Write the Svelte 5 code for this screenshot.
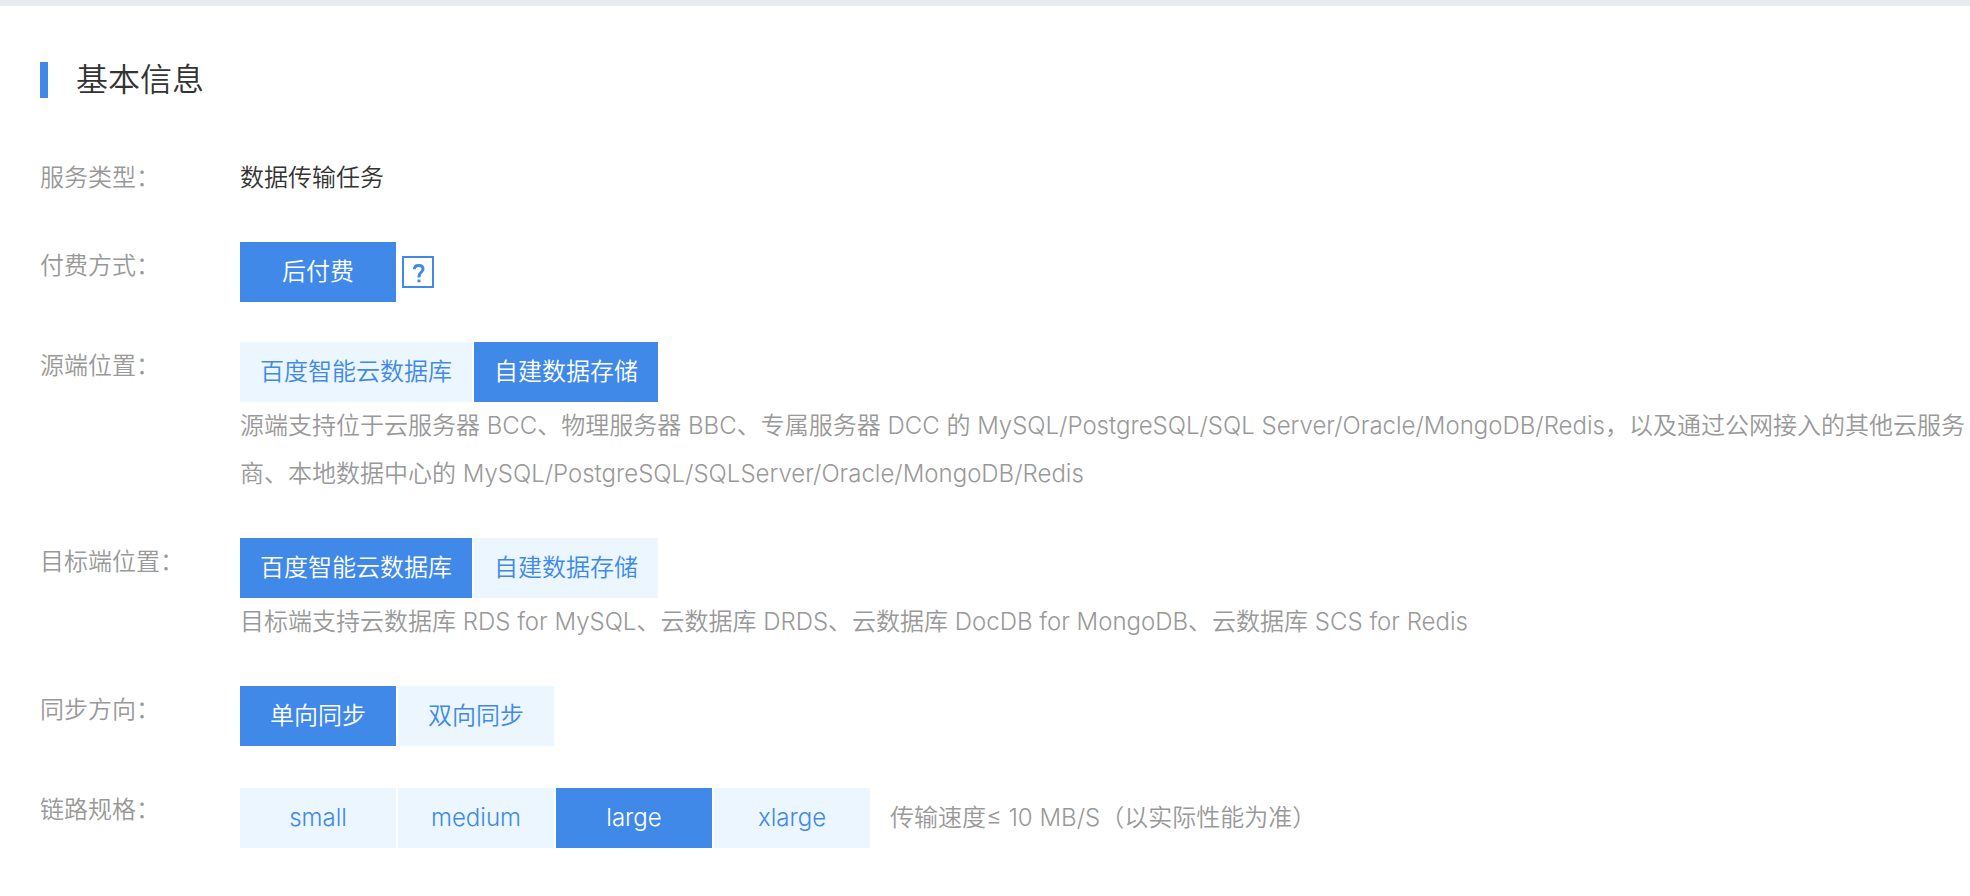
<script lang="ts">
	const engines = [
		{ value: 'cloud', text: '百度智能云数据库' },
		{ value: 'self', text: '自建数据存储' }
	];
	const directions = [
		{ value: 'single', text: '单向同步' },
		{ value: 'double', text: '双向同步' }
	];
	const specs = ['small', 'medium', 'large', 'xlarge'];

	let source = $state('self');
	let target = $state('cloud');
	let direction = $state('single');
	let spec = $state('large');
</script>

<main class="panel">
	<h1>基本信息</h1>

	<div class="row">
		<div class="label">服务类型：</div>
		<div class="content">数据传输任务</div>
	</div>

	<div class="row">
		<div class="label" id="pay">付费方式：</div>
		<div class="content options" role="group" aria-labelledby="pay">
			<button type="button" class="option active">后付费</button>
			<button type="button" class="help" aria-label="付费方式">
				<svg viewBox="0 0 32 32" aria-hidden="true">
					<rect x="1" y="1" width="30" height="30" />
					<path class="mark" d="M12.4 13.2C12.5 10.7 14.3 9.4 16.8 9.4C19.3 9.4 21 10.8 21 13C21 16.2 17 16.4 17 20.4V21.4M17 23.4V26.2" />
				</svg>
			</button>
		</div>
	</div>

	<div class="row">
		<div class="label" id="source">源端位置：</div>
		<div class="content">
			<div class="options" role="group" aria-labelledby="source">
				{#each engines as item}
					<button type="button" class="option" class:active={source === item.value} onclick={() => (source = item.value)}>{item.text}</button>
				{/each}
			</div>
			<p>源端支持位于云服务器 BCC、物理服务器 BBC、专属服务器 DCC 的 MySQL/PostgreSQL/SQL Server/Oracle/MongoDB/Redis，以及通过公网接入的其他云服务商、本地数据中心的 MySQL/PostgreSQL/SQLServer/Oracle/MongoDB/Redis</p>
		</div>
	</div>

	<div class="row">
		<div class="label" id="target">目标端位置：</div>
		<div class="content">
			<div class="options" role="group" aria-labelledby="target">
				{#each engines as item}
					<button type="button" class="option" class:active={target === item.value} onclick={() => (target = item.value)}>{item.text}</button>
				{/each}
			</div>
			<p>目标端支持云数据库 RDS for MySQL、云数据库 DRDS、云数据库 DocDB for MongoDB、云数据库 SCS for Redis</p>
		</div>
	</div>

	<div class="row">
		<div class="label" id="direction">同步方向：</div>
		<div class="content options" role="group" aria-labelledby="direction">
			{#each directions as item}
				<button type="button" class="option" class:active={direction === item.value} onclick={() => (direction = item.value)}>{item.text}</button>
			{/each}
		</div>
	</div>

	<div class="row">
		<div class="label" id="spec">链路规格：</div>
		<div class="content options" role="group" aria-labelledby="spec">
			{#each specs as item}
				<button type="button" class="option" class:active={spec === item} onclick={() => (spec = item)}>{item}</button>
			{/each}
			<span class="hint">传输速度≤ 10 MB/S（以实际性能为准）</span>
		</div>
	</div>
</main>

<style>
	:global(body) {
		margin: 0;
		background: #fff;
		color: #333;
		font-family: Inter, 'Noto Sans CJK SC', sans-serif;
		font-size: 24px;
		font-weight: 350;
	}

	.panel {
		border-top: 6px solid #e8ecf0;
		padding: 56px 0 48px 40px;
	}

	h1 {
		margin: 0 0 56px;
		border-left: 8px solid #4089e8;
		padding-left: 28px;
		font-size: 32px;
		font-weight: 350;
		line-height: 36px;
	}

	.row {
		display: flex;
		margin-bottom: 40px;
		line-height: 48px;
	}

	.label {
		flex: 0 0 200px;
		color: #999;
	}

	.content {
		flex: 1;
		min-width: 0;
	}

	.options {
		display: flex;
		align-items: center;
		gap: 2px;
	}

	.option {
		min-width: 156px;
		height: 60px;
		border: 0;
		padding: 0 20px;
		background: #ebf6ff;
		color: #4089e8;
		font: inherit;
		cursor: pointer;
	}

	.option.active {
		background: #4089e8;
		color: #fff;
	}

	.help {
		width: 32px;
		height: 32px;
		margin-left: 4px;
		border: 0;
		padding: 0;
		background: none;
		cursor: pointer;
	}

	.help svg {
		display: block;
		fill: none;
		stroke: #4089e8;
		stroke-width: 2;
	}

	.help .mark {
		stroke-width: 3;
	}

	p {
		margin: 0;
		color: #999;
	}

	.hint {
		margin-left: 18px;
		color: #999;
		line-height: 64px;
	}
</style>
